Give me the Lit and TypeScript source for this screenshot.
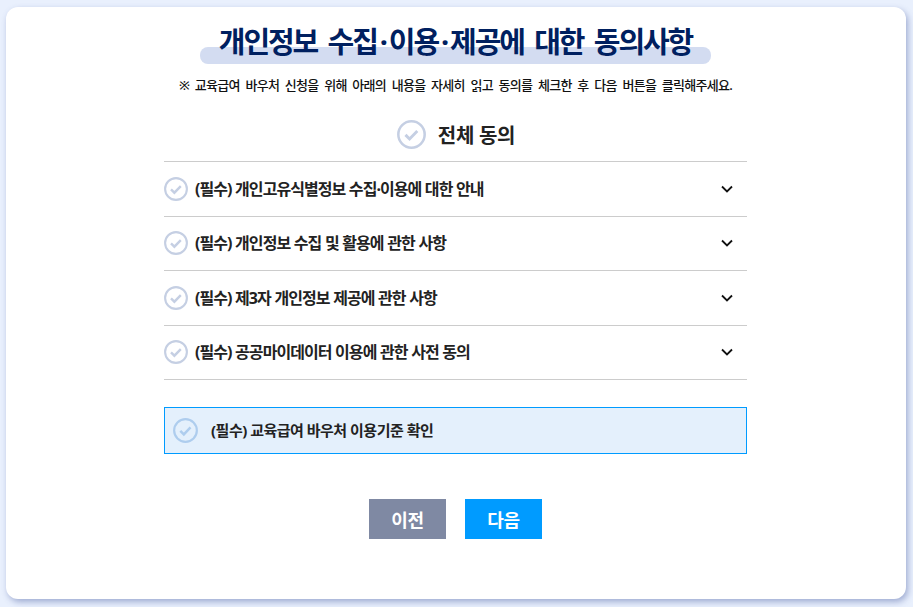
import { LitElement, css, html } from "lit";
import { customElement } from "lit/decorators.js";

const terms = [
  "(필수) 개인고유식별정보 수집·이용에 대한 안내",
  "(필수) 개인정보 수집 및 활용에 관한 사항",
  "(필수) 제3자 개인정보 제공에 관한 사항",
  "(필수) 공공마이데이터 이용에 관한 사전 동의",
];

const check = (cls: string) => html`
  <svg class="check ${cls}" viewBox="0 0 24 24" aria-hidden="true">
    <circle cx="12" cy="12" r="10.9" fill="none" stroke="currentColor" stroke-width="2.1"></circle>
    <path d="M7 12.3l3.4 3.4 6.4-6.6" fill="none" stroke="currentColor" stroke-width="2.4"></path>
  </svg>
`;

@customElement("app-root")
export class AppRoot extends LitElement {
  static styles = css`
    :host {
      display: block;
      height: 607px;
      box-sizing: border-box;
      padding: 7px 7px 8px 6px;
      background: #e9f0fd;
      overflow: hidden;
      font-family: "Noto Sans", "Noto Sans CJK KR", sans-serif;
      color: #222;
    }

    .card {
      height: 100%;
      box-sizing: border-box;
      display: flex;
      flex-direction: column;
      align-items: center;
      padding: 15px 1px 0 0;
      background: #fff;
      border-radius: 12px;
      box-shadow: 2px 3px 6px rgba(70, 90, 160, 0.45);
    }

    .title {
      position: relative;
      z-index: 0;
      margin: 0;
      padding: 0 19px;
      color: #002060;
      font-size: 29px;
      font-weight: 700;
      line-height: 40px;
      letter-spacing: -2.1px;
      word-spacing: 5px;
      white-space: nowrap;
    }

    .title .dot {
      margin: 0 3px;
    }

    .title::after {
      content: "";
      position: absolute;
      z-index: -1;
      left: 0;
      right: 0;
      top: 25px;
      height: 17px;
      border-radius: 8px;
      background: #d3dcf1;
    }

    .lead {
      margin: 13px 0 0;
      color: #111;
      font-size: 13px;
      font-weight: 500;
      line-height: 20px;
      letter-spacing: -0.72px;
      word-spacing: 3px;
      white-space: nowrap;
    }

    .all {
      display: flex;
      align-items: center;
      gap: 12px;
      height: 49px;
      margin: 15px 0 2px;
      padding-left: 1px;
      font-size: 20px;
      font-weight: 700;
      letter-spacing: -0.3px;
    }

    .check {
      flex: none;
      display: block;
      color: #c5cfe3;
    }

    .check.lg {
      width: 29px;
      height: 29px;
    }

    .check.md {
      width: 24px;
      height: 24px;
    }

    .check.info {
      width: 25px;
      height: 25px;
      color: #aecdee;
    }

    .list {
      width: 583px;
      border-top: 1px solid #ccc;
    }

    .row {
      display: flex;
      align-items: center;
      gap: 7px;
      height: 53.5px;
      padding-right: 13px;
      border-bottom: 1px solid #ccc;
      font-size: 16px;
      font-weight: 700;
      letter-spacing: -0.95px;
      word-spacing: 0.4px;
    }

    .row span {
      flex: 1;
      padding-bottom: 2px;
    }

    .chevron {
      width: 14px;
      height: 14px;
      color: #111;
    }

    .notice {
      display: flex;
      align-items: center;
      gap: 13px;
      width: 583px;
      height: 47px;
      box-sizing: border-box;
      margin-top: 27px;
      padding-left: 8px;
      background: #e4f0fc;
      border: 1px solid #009bff;
      font-size: 15px;
      font-weight: 700;
      letter-spacing: -0.5px;
    }

    .notice span {
      padding-bottom: 2px;
    }

    .actions {
      display: flex;
      gap: 19px;
      margin-top: 45px;
    }

    .btn {
      width: 77px;
      height: 40px;
      padding: 0;
      border: 0;
      color: #fff;
      font: 700 18px/40px "Noto Sans CJK KR", sans-serif;
      letter-spacing: -0.3px;
    }

    .prev {
      background: #7f89a3;
    }

    .next {
      background: #009bff;
    }
  `;

  render() {
    return html`
      <main class="card">
        <h1 class="title">개인정보 수집<span class="dot">·</span>이용<span class="dot">·</span>제공에 대한 동의사항</h1>
        <p class="lead">※ 교육급여 바우처 신청을 위해 아래의 내용을 자세히 읽고 동의를 체크한 후 다음 버튼을 클릭해주세요.</p>
        <div class="all">${check("lg")}<span>전체 동의</span></div>
        <div class="list">
          ${terms.map(
            (t) => html`
              <div class="row">
                ${check("md")}
                <span>${t}</span>
                <svg class="chevron" viewBox="0 0 14 14" aria-hidden="true">
                  <path d="M2 4.5l5 5 5-5" fill="none" stroke="currentColor" stroke-width="1.8"></path>
                </svg>
              </div>
            `,
          )}
        </div>
        <div class="notice">${check("info")}<span>(필수) 교육급여 바우처 이용기준 확인</span></div>
        <div class="actions">
          <button class="btn prev">이전</button>
          <button class="btn next">다음</button>
        </div>
      </main>
    `;
  }
}
